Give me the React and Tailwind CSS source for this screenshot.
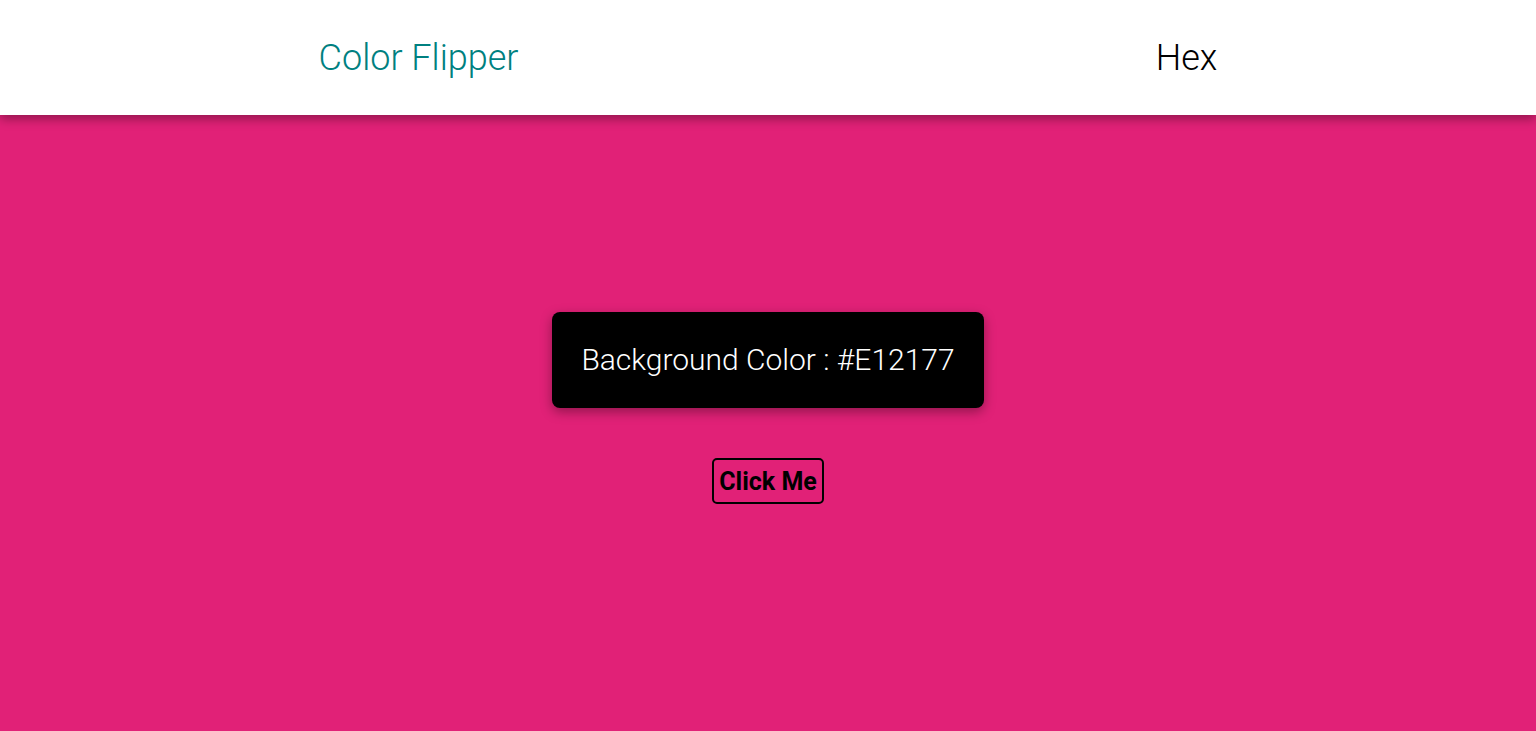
export default function App() {
  const font = { fontFamily: "Roboto, 'Liberation Sans', sans-serif" };
  return (
    <div className="min-h-[731px] bg-[#E12177] flex flex-col" style={font}>
      <header className="h-[115px] bg-white grid grid-cols-2 items-center shadow-[0_4px_10px_rgba(0,0,0,0.35)] relative z-10">
        <div className="pl-[69px] flex justify-center">
          <span className="text-[36px] font-light text-[#008080] leading-none">Color Flipper</span>
        </div>
        <div className="pl-[69px] flex justify-center">
          <span className="text-[36px] font-light text-black leading-none">Hex</span>
        </div>
      </header>
      <main className="flex flex-col items-center pt-[197px]">
        <div className="w-[432px] h-[96px] bg-black rounded-[8px] flex items-center justify-center shadow-[0_4px_12px_rgba(0,0,0,0.35)]">
          <span className="text-white text-[30px] font-light leading-none">Background Color : #E12177</span>
        </div>
        <button className="mt-[50px] h-[46px] w-[112px] border-2 border-black rounded-[5px] text-[25px] font-bold text-black leading-none bg-transparent">
          Click Me
        </button>
      </main>
    </div>
  );
}
